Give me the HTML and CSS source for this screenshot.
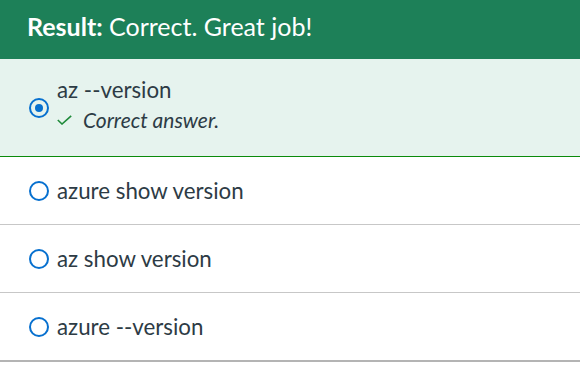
FILE: index.html
```html
<!DOCTYPE html>
<html lang="en">
<head>
    <meta charset="UTF-8">
    <title>Quiz Result</title>
    <link rel="stylesheet" href="styles.css">
</head>
<body>
    <div class="quiz">
        <div class="result-bar"><strong>Result:</strong> Correct. Great job!</div>
        <ul class="answers">
            <li class="answer selected">
                <span class="radio checked"></span>
                <div class="answer-text">
                    <div class="label">az --version</div>
                    <div class="feedback">
                        <svg class="check" viewBox="0 0 15 10" width="15" height="10"><path d="M0.8 5 L5 9 L14.2 0.8" fill="none" stroke="#1f8a3a" stroke-width="1.6"/></svg>
                        <em>Correct answer.</em>
                    </div>
                </div>
            </li>
            <li class="answer">
                <span class="radio"></span>
                <div class="label">azure show version</div>
            </li>
            <li class="answer">
                <span class="radio"></span>
                <div class="label">az show version</div>
            </li>
            <li class="answer">
                <span class="radio"></span>
                <div class="label">azure --version</div>
            </li>
        </ul>
    </div>
</body>
</html>
```

FILE: styles.css
```css
* {
    box-sizing: border-box;
    margin: 0;
    padding: 0;
}

body {
    font-family: 'Lato', 'Liberation Sans', sans-serif;
    background: #ffffff;
    color: #2d3b45;
}

.quiz {
    width: 580px;
    border-bottom: 2px solid #b4b4b4;
    box-shadow: 0 3px 4px rgba(0, 0, 0, 0.12);
}

.result-bar {
    height: 59px;
    background: #1d8058;
    color: #ffffff;
    font-size: 25px;
    line-height: 30px;
    padding: 11px 0 0 27px;
}

.answers {
    list-style: none;
}

.answer {
    display: flex;
    align-items: center;
    gap: 8px;
    height: 68px;
    padding-left: 29px;
    border-bottom: 1px solid #c7c7c7;
    font-size: 22.3px;
    line-height: 28px;
}

.answer:last-child {
    height: 67px;
    border-bottom: none;
}

.answer.selected {
    height: 98px;
    background: #e6f3ee;
    border-bottom: 1px solid #0a8a0a;
}

.answer-text {
    margin-bottom: 6px;
}

.radio {
    width: 20px;
    height: 20px;
    border: 2px solid #0770cf;
    border-radius: 50%;
    flex-shrink: 0;
    display: flex;
    align-items: center;
    justify-content: center;
}

.radio.checked::after {
    content: '';
    width: 8px;
    height: 8px;
    border-radius: 50%;
    background: #0770cf;
}

.feedback {
    display: flex;
    align-items: center;
    gap: 11px;
    font-size: 21px;
    line-height: 28px;
    margin-top: 2px;
}
```
